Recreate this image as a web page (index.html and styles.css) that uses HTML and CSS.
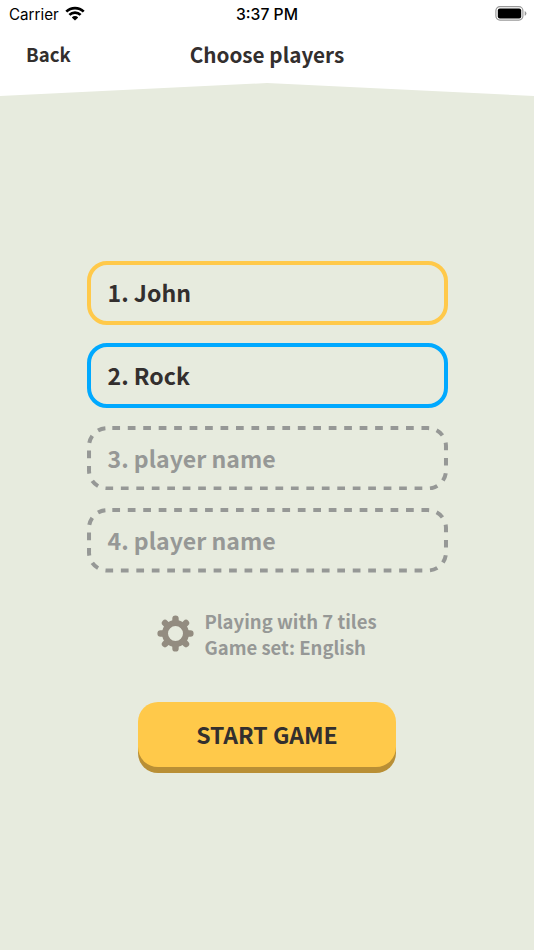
FILE: index.html
```html
<!DOCTYPE html>
<html lang="en">
<head>
  <meta charset="UTF-8" />
  <meta name="viewport" content="width=device-width, initial-scale=1.0" />
  <title>Choose players</title>
  <link rel="stylesheet" href="styles.css">
</head>
<body>
  <header class="header">
    <div class="status-bar">
      <div class="carrier">
        <span>Carrier</span>
        <svg class="wifi" width="20" height="15" viewBox="0 0 20 15">
          <path d="M1.3 5.6a12.5 12.5 0 0 1 17.4 0M4.4 8.9a8 8 0 0 1 11.2 0" fill="none" stroke="#000" stroke-width="2.7"/>
          <path d="M10 14.6l-3.2-3.2a4.6 4.6 0 0 1 6.4 0z"/>
        </svg>
      </div>
      <div class="time">3:37 PM</div>
      <svg class="battery" width="32" height="15" viewBox="0 0 32 15">
        <rect x="0.9" y="0.7" width="27" height="13.4" rx="4" fill="none" stroke="#999" stroke-width="1.2"/>
        <rect x="2.8" y="2.5" width="23.4" height="9.9" rx="2"/>
        <path d="M29.7 5v4.8q1.7-.8 1.7-2.4T29.7 5z" fill="#999"/>
      </svg>
    </div>
    <nav class="nav">
      <a class="back">Back</a>
      <h1>Choose players</h1>
    </nav>
  </header>

  <main class="content">
    <div class="players">
      <div class="player yellow">1. John</div>
      <div class="player blue">2. Rock</div>
      <div class="player empty">
        <svg class="dashes" width="361" height="64.6" viewBox="0 0 361 64.6">
          <path d="M25.3 2.1H341A18 18 0 0 1 359 20.1V44.5A18 18 0 0 1 341 62.5H20A18 18 0 0 1 2 44.5V20.1A18 18 0 0 1 20 2.1H25.3"/>
        </svg>
        <span>3. player name</span>
      </div>
      <div class="player empty">
        <svg class="dashes" width="361" height="64.6" viewBox="0 0 361 64.6">
          <path d="M25.3 2.1H341A18 18 0 0 1 359 20.1V44.5A18 18 0 0 1 341 62.5H20A18 18 0 0 1 2 44.5V20.1A18 18 0 0 1 20 2.1H25.3"/>
        </svg>
        <span>4. player name</span>
      </div>
    </div>

    <div class="settings">
      <svg class="gear" width="37" height="37" viewBox="-18.5 -18.5 37 37">
        <circle r="10.5" fill="none" stroke="#938c80" stroke-width="6"/>
        <g stroke="#938c80" stroke-width="6.4" stroke-linecap="round">
          <path d="M0-11V-14.9M0 11V14.9M-11 0H-14.9M11 0H14.9"/>
          <path d="M-7.8-7.8L-10.5-10.5M7.8-7.8L10.5-10.5M-7.8 7.8L-10.5 10.5M7.8 7.8L10.5 10.5"/>
        </g>
      </svg>
      <div class="settings-text">
        <div>Playing with 7 tiles</div>
        <div>Game set: English</div>
      </div>
    </div>

    <button class="start">START GAME</button>
  </main>
</body>
</html>
```
FILE: styles.css
```css
body {
  margin: 0;
  min-height: 950px;
  background: #e7ebde;
  color: #332f2e;
  font-family: "Noto Sans CJK SC", sans-serif;
  font-weight: bold;
}
.header {
  height: 96px;
  background: #fff;
  clip-path: polygon(0 0, 100% 0, 100% 100%, 50% 83px, 0 100%);
}
.status-bar {
  display: grid;
  grid-template-columns: 1fr auto 1fr;
  align-items: center;
  height: 28px;
  padding: 0 7px 0 9px;
  color: #000;
  font-family: Inter, sans-serif;
  font-size: 15.2px;
  font-weight: 400;
}
.carrier {
  display: flex;
  align-items: center;
  gap: 6px;
}
.wifi {
  margin-top: -2px;
}
.time {
  margin-right: 2px;
  font-size: 15.7px;
  font-weight: 500;
}
.battery {
  justify-self: end;
  margin-top: -2px;
}
.nav {
  display: grid;
  grid-template-columns: 1fr auto 1fr;
  align-items: center;
  height: 51px;
  padding: 0 26px;
}
.back {
  font-size: 18.6px;
}
h1 {
  margin: 0;
  font-size: 20.7px;
}
.content {
  display: flex;
  flex-direction: column;
  align-items: center;
  padding-top: 164.6px;
}
.players {
  display: flex;
  flex-direction: column;
  gap: 18px;
  width: 361px;
}
.player {
  box-sizing: border-box;
  display: flex;
  align-items: center;
  height: 64.6px;
  padding: 0 17px 1px;
  border: 4px solid;
  border-radius: 20px;
  font-size: 23.1px;
}
.player.yellow {
  border-color: #ffc94a;
}
.player.blue {
  border-color: #00a9ff;
}
.player.empty {
  position: relative;
  padding-left: 21px;
  border: 0;
  color: #969896;
}
.dashes {
  position: absolute;
  top: 0;
  left: 0;
}
.dashes path {
  fill: none;
  stroke: #969896;
  stroke-width: 4;
  stroke-dasharray: 7.73 7.73;
}
.settings {
  display: flex;
  align-items: center;
  gap: 10px;
  margin-top: 35px;
  color: #969896;
  font-size: 18.5px;
  line-height: 26px;
}
.start {
  width: 258px;
  height: 65px;
  margin-top: 42px;
  padding: 0;
  border: 0;
  border-radius: 20px;
  background: #ffc94a;
  box-shadow: 0 6px #b98f35;
  color: #332f2e;
  font: bold 23px "Noto Sans CJK SC", sans-serif;
}
```
